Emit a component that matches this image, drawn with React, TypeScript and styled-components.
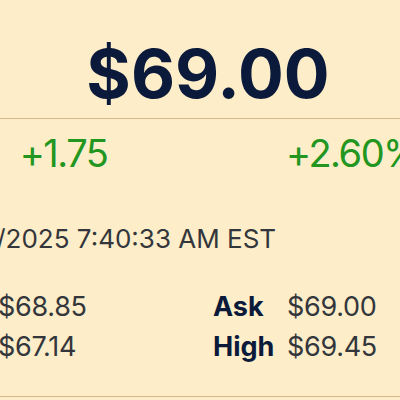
import React from "react";
import styled, { createGlobalStyle } from "styled-components";

const GlobalStyle = createGlobalStyle`
  html, body {
    margin: 0;
    padding: 0;
    background: #fdedc9;
    overflow: hidden;
  }
  body {
    font-family: Inter, "Noto Sans", sans-serif;
  }
`;

const Viewport = styled.div`
  width: 400px;
  height: 400px;
  overflow: hidden;
  background: #fdedc9;
`;

const Card = styled.section`
  width: 600px;
  margin-left: -92px;
  padding: 0 16px;
  box-sizing: border-box;
  border-bottom: 1px solid #d6b888;
`;

const PriceBlock = styled.div`
  padding: 33px 0 5px;
  border-bottom: 1px solid #d6b888;
  text-align: center;
  font-size: 68px;
  line-height: 80px;
  font-weight: 700;
  color: #0b1a3a;
`;

const TwoCols = styled.div<{ $top: number; $bottom?: number }>`
  display: grid;
  grid-template-columns: 1fr 1fr;
  column-gap: 10px;
  padding-top: ${(p) => p.$top}px;
  padding-bottom: ${(p) => p.$bottom ?? 0}px;
`;

const Change = styled.div`
  text-align: center;
  font-size: 38px;
  line-height: 48px;
  letter-spacing: -1.5px;
  color: #22961e;
`;

const Timestamp = styled.div`
  padding-top: 46px;
  font-size: 26px;
  line-height: 32px;
  color: #33363b;
`;

const Stat = styled.div`
  display: flex;
  align-items: baseline;
  font-size: 27px;
  line-height: 40px;
`;

const Label = styled.span`
  width: 74px;
  flex-shrink: 0;
  font-weight: 700;
  color: #0b1a3a;
`;

const Value = styled.span`
  color: #33363b;
  letter-spacing: -0.3px;
`;

const stats = [
  ["Bid", "$68.85", "Ask", "$69.00"],
  ["Low", "$67.14", "High", "$69.45"],
];

export default function App() {
  return (
    <>
      <GlobalStyle />
      <Viewport>
        <Card>
          <PriceBlock>$69.00</PriceBlock>
          <TwoCols $top={10}>
            <Change>+1.75</Change>
            <Change>+2.60%</Change>
          </TwoCols>
          <Timestamp>02/07/2025 7:40:33 AM EST</Timestamp>
          <TwoCols $top={32} $bottom={29}>
            {stats.map(([l1, v1, l2, v2]) => (
              <React.Fragment key={l1}>
                <Stat>
                  <Label>{l1}</Label>
                  <Value>{v1}</Value>
                </Stat>
                <Stat>
                  <Label>{l2}</Label>
                  <Value>{v2}</Value>
                </Stat>
              </React.Fragment>
            ))}
          </TwoCols>
        </Card>
      </Viewport>
    </>
  );
}
